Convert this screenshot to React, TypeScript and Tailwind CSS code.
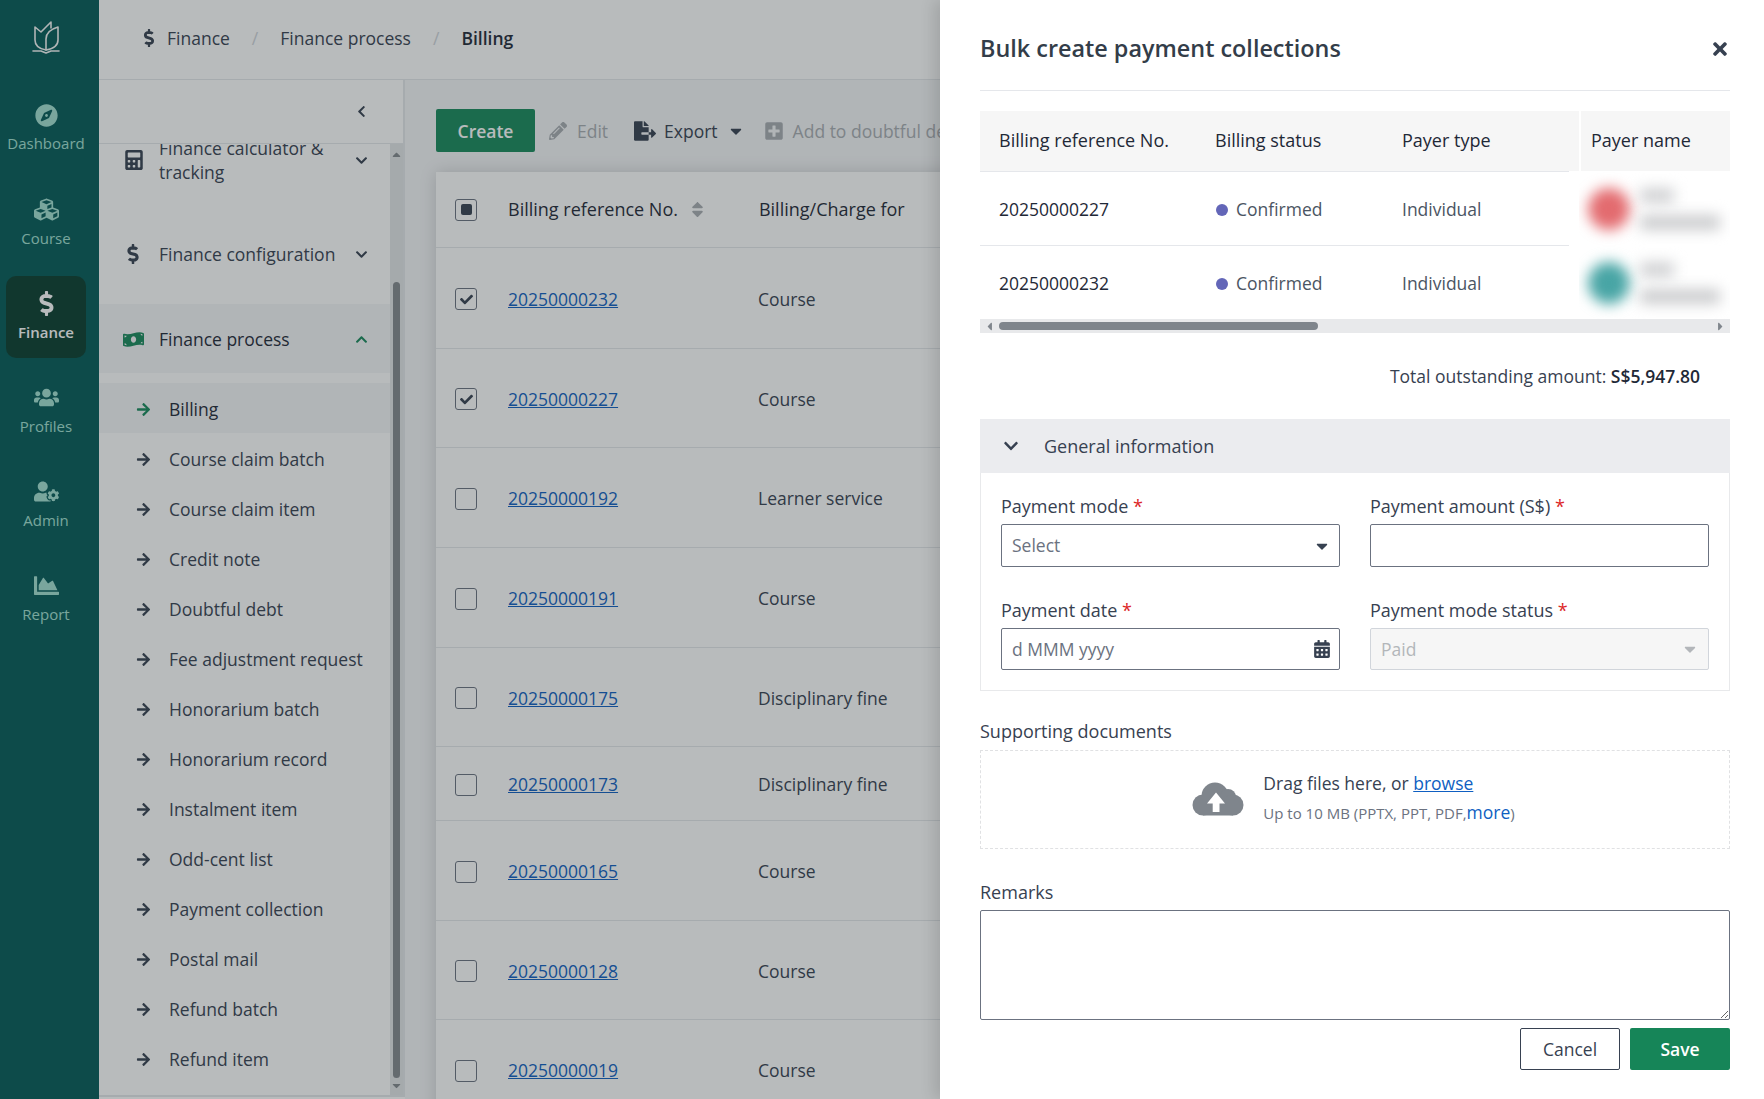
import React from "react";
import {
  FaArrowRight,
  FaCalculator,
  FaCalendarAlt,
  FaCaretDown,
  FaCaretLeft,
  FaCaretRight,
  FaCaretUp,
  FaChartArea,
  FaCheck,
  FaChevronDown,
  FaChevronLeft,
  FaChevronUp,
  FaCompass,
  FaCubes,
  FaDollarSign,
  FaFileExport,
  FaMoneyBillWave,
  FaPencilAlt,
  FaPlusSquare,
  FaSort,
  FaTimes,
  FaUserCog,
  FaUsers,
} from "react-icons/fa";

const railItems = [
  { label: "Dashboard", icon: <FaCompass size={23} /> },
  { label: "Course", icon: <FaCubes size={25} /> },
  { label: "Finance", icon: <FaDollarSign size={25} />, active: true },
  { label: "Profiles", icon: <FaUsers size={25} /> },
  { label: "Admin", icon: <FaUserCog size={25} /> },
  { label: "Report", icon: <FaChartArea size={25} /> },
];

const subItems = [
  "Course claim batch",
  "Course claim item",
  "Credit note",
  "Doubtful debt",
  "Fee adjustment request",
  "Honorarium batch",
  "Honorarium record",
  "Instalment item",
  "Odd-cent list",
  "Payment collection",
  "Postal mail",
  "Refund batch",
  "Refund item",
];

const billingRows = [
  { no: "20250000232", charge: "Course", checked: true, height: "h-[101px]" },
  { no: "20250000227", charge: "Course", checked: true, height: "h-[99px]" },
  { no: "20250000192", charge: "Learner service", height: "h-[100px]" },
  { no: "20250000191", charge: "Course", height: "h-[100px]" },
  { no: "20250000175", charge: "Disciplinary fine", height: "h-[99px]" },
  { no: "20250000173", charge: "Disciplinary fine", height: "h-[74px]" },
  { no: "20250000165", charge: "Course", height: "h-[100px]" },
  { no: "20250000128", charge: "Course", height: "h-[99px]" },
  { no: "20250000019", charge: "Course", height: "h-[100px]" },
];

function Logo() {
  return (
    <svg width="30" height="38" viewBox="0 0 30 38" fill="none" stroke="#f4f6f6" strokeWidth="1.6" strokeLinejoin="round" strokeLinecap="round">
      <path d="M15 31 C9 30 4 27 4 21 V8 L10 13 L20 3 V9" />
      <path d="M15 31 V20 C15 14 20 10 27 8 V21 C27 27 21 30 15 31 Z" />
      <path d="M2 32 H10 L15 34 L20 32 H28" />
    </svg>
  );
}

function UploadCloud() {
  return (
    <svg width="52" height="35" viewBox="0 0 52 35" fill="#7f858c" className="shrink-0">
      <circle cx="11" cy="23" r="10.5" />
      <circle cx="23" cy="14" r="13.5" />
      <circle cx="36" cy="15" r="8" />
      <circle cx="41" cy="23" r="10.5" />
      <rect x="11" y="15" width="30" height="18.5" />
      <path d="M24 10.5 L33 21.5 H27.5 V30 H20.7 V21.5 H15 Z" fill="#ffffff" />
    </svg>
  );
}

function Checkbox({ checked, mixed }: { checked?: boolean; mixed?: boolean }) {
  return (
    <span className="flex h-[22px] w-[22px] shrink-0 items-center justify-center rounded-[3px] border border-[#6b7280] bg-white text-[#374151]">
      {checked && <FaCheck size={13} />}
      {mixed && <span className="h-[11px] w-[11px] rounded-[2px] bg-[#374151]" />}
    </span>
  );
}

function Required() {
  return <span className="text-[#dc2626]"> *</span>;
}

function PayerName({ color }: { color: string }) {
  return (
    <div className="relative flex h-full items-center pl-[9px]">
      <span className={`h-[42px] w-[42px] rounded-full blur-[7px] ${color}`} />
      <div className="ml-[10px] flex flex-col gap-[12px]">
        <span className="h-[15px] w-[34px] bg-[#d0d1d3] blur-[7px]" />
        <span className="h-[15px] w-[80px] bg-[#cbccce] blur-[7px]" />
      </div>
    </div>
  );
}

function DrawerForm() {
  return (
    <aside className="absolute right-0 top-0 z-20 flex h-full w-[824px] flex-col bg-white pl-[40px] pr-[34px] text-[17.5px] text-[#374151] shadow-[-6px_0_14px_rgba(0,0,0,0.12)]">
      <div className="flex h-[91px] shrink-0 items-center justify-between border-b border-[#e5e7eb] pt-[8px]">
        <h2 className="text-[23.4px] font-semibold text-[#333d49]">Bulk create payment collections</h2>
        <button className="text-[#374151]">
          <FaTimes size={20} />
        </button>
      </div>

      <div className="mt-[20px] flex h-[222px] shrink-0 flex-col">
        <div className="flex h-[208px]">
          <div className="w-[599px]">
            <div className="flex h-[60px] items-center bg-[#f6f6f6] pb-[2px] text-[18px] font-medium text-[#1f2937]">
              <span className="w-[235px] pl-[19px]">Billing reference No.</span>
              <span className="w-[187px]">Billing status</span>
              <span>Payer type</span>
            </div>
            <div className="flex h-[75px] w-[589px] items-center border-y border-[#e5e7eb] pt-[2px] text-[#1f2937]">
              <span className="w-[235px] pl-[19px]">20250000227</span>
              <span className="flex w-[187px] items-center gap-[8px] pl-px text-[#4b5563]">
                <span className="h-[12px] w-[12px] rounded-full bg-[#6366b8]" />
                Confirmed
              </span>
              <span className="text-[#4b5563]">Individual</span>
            </div>
            <div className="flex h-[73px] w-[589px] items-center pt-[2px] text-[#1f2937]">
              <span className="w-[235px] pl-[19px]">20250000232</span>
              <span className="flex w-[187px] items-center gap-[8px] pl-px text-[#4b5563]">
                <span className="h-[12px] w-[12px] rounded-full bg-[#6366b8]" />
                Confirmed
              </span>
              <span className="text-[#4b5563]">Individual</span>
            </div>
          </div>
          <div className="w-[151px] overflow-hidden">
            <div className="flex h-[60px] items-center border-l-2 border-white bg-[#f6f6f6] pb-[2px] pl-[10px] text-[18px] font-medium text-[#1f2937]">
              Payer name
            </div>
            <div className="h-[75px]">
              <PayerName color="bg-[#e36b6f]" />
            </div>
            <div className="h-[73px]">
              <PayerName color="bg-[#48a5a5]" />
            </div>
          </div>
        </div>
        <div className="flex h-[14px] shrink-0 items-center justify-between bg-[#e8e9eb] px-[3px] text-[#7f858c]">
          <FaCaretLeft size={13} />
          <span className="ml-[3px] mr-auto h-[8px] w-[319px] rounded-full bg-[#7f858c]" />
          <FaCaretRight size={13} />
        </div>
      </div>

      <p className="mt-[30px] h-[24px] shrink-0 pr-[30px] text-right">
        Total outstanding amount: <span className="font-semibold text-[#1f2937]">S$5,947.80</span>
      </p>

      <section className="mt-[32px] h-[272px] shrink-0 border border-t-0 border-[#e8e9eb]">
        <div className="-mx-px flex h-[54px] items-center bg-[#ebecef] pl-[23px] text-[18px] font-medium">
          <FaChevronDown size={16} />
          <span className="ml-[25px]">General information</span>
        </div>
        <div className="grid grid-cols-[339px_339px] gap-x-[30px] px-[20px] pt-[20px] text-[18px]">
          <div>
            <label className="block h-[31px] font-medium">Payment mode<Required /></label>
            <div className="flex h-[43px] items-center justify-between rounded-[2px] border border-[#6b7280] pl-[10px] pr-[8px] text-[17.5px] text-[#6b7280]">
              Select
              <FaCaretDown size={18} className="text-[#374151]" />
            </div>
          </div>
          <div>
            <label className="block h-[31px] font-medium">Payment amount (S$)<Required /></label>
            <input className="block h-[43px] w-full rounded-[2px] border border-[#6b7280] bg-white" />
          </div>
          <div className="mt-[30px]">
            <label className="block h-[31px] font-medium">Payment date<Required /></label>
            <div className="flex h-[42px] items-center justify-between rounded-[2px] border border-[#6b7280] pl-[10px] pr-[8px] text-[17.5px] text-[#6b7280]">
              d MMM yyyy
              <FaCalendarAlt size={18} className="text-[#374151]" />
            </div>
          </div>
          <div className="mt-[30px]">
            <label className="block h-[31px] font-medium">Payment mode status<Required /></label>
            <div className="flex h-[42px] items-center justify-between rounded-[2px] border border-[#d1d5db] bg-[#f6f6f6] pl-[10px] pr-[9px] text-[17.5px] text-[#b3b6ba]">
              Paid
              <FaCaretDown size={18} />
            </div>
          </div>
        </div>
      </section>

      <label className="mt-[27px] block h-[32px] shrink-0 text-[18px] font-medium">Supporting documents</label>
      <div className="flex h-[99px] shrink-0 items-center justify-center gap-[19px] border border-dashed border-[#e0e1e3] pr-[3px]">
        <UploadCloud />
        <div className="-mt-[3px] flex flex-col">
          <span className="h-[29px]">
            Drag files here, or <span className="text-[#0f5fc2] underline">browse</span>
          </span>
          <span className="text-[15px] text-[#6b7280]">
            Up to 10 MB (PPTX, PPT, PDF,<span className="text-[17.5px] text-[#0f5fc2]">more</span>)
          </span>
        </div>
      </div>

      <label className="mt-[30px] block h-[31px] shrink-0 text-[18px] font-medium">Remarks</label>
      <textarea className="block h-[110px] w-full shrink-0 rounded-[2px] border border-[#6b7280] bg-white" />

      <div className="mt-[8px] flex justify-end gap-[10px]">
        <button className="h-[42px] w-[100px] rounded-[2px] border border-[#374151] bg-white text-[#374151]">Cancel</button>
        <button className="h-[42px] w-[100px] rounded-[2px] bg-[#168558] font-semibold text-white">Save</button>
      </div>
    </aside>
  );
}

export default function App() {
  return (
    <div className="relative flex h-[1099px] w-[1764px] overflow-hidden bg-white font-['Open_Sans',sans-serif] text-[17.5px] text-[#374151]">
      <nav className="flex h-full w-[99px] shrink-0 flex-col items-start bg-[#045a58] pl-[6px]">
        <div className="flex h-[88px] w-[80px] items-center justify-center pb-[12px]">
          <Logo />
        </div>
        <div className="flex flex-col gap-[12px]">
          {railItems.map((item) => (
            <div
              key={item.label}
              className={`flex h-[82px] w-[80px] flex-col items-center justify-center gap-[5px] rounded-[10px] text-[15px] ${
                item.active ? "bg-[#0a3d2f] font-semibold text-white" : "text-[#a3e0d2]"
              }`}
            >
              {item.icon}
              {item.label}
            </div>
          ))}
        </div>
      </nav>

      <div className="flex min-w-0 flex-1 flex-col">
        <header className="flex h-[80px] shrink-0 items-center border-b border-[#e5e7eb] pb-[3px] pl-[41px]">
          <FaDollarSign size={18} className="text-[#374151]" />
          <span className="ml-[9px]">Finance</span>
          <span className="mx-[22px] text-[#d1d5db]">/</span>
          <span>Finance process</span>
          <span className="mx-[22px] text-[#d1d5db]">/</span>
          <span className="font-semibold text-[#1f2937]">Billing</span>
        </header>

        <div className="flex min-h-0 flex-1">
          <div className="flex h-[1017px] w-[306px] shrink-0 flex-col border-r-2 border-b-2 border-[#e5e7eb]">
            <div className="flex h-[64px] shrink-0 items-center justify-end border-b border-[#e5e7eb] pr-[35px]">
              <FaChevronLeft size={13} />
            </div>
            <div className="flex min-h-0 flex-1">
              <div className="min-w-0 flex-1 overflow-hidden">
                <div className="-mt-[14px] flex h-[60px] items-center pl-[25px] pr-[22px]">
                  <FaCalculator size={20} />
                  <span className="ml-[15px] w-[190px] leading-[24px]">Finance calculator &amp; tracking</span>
                  <FaChevronDown size={13} className="ml-auto" />
                </div>
                <div className="mt-[34px] flex h-[60px] items-center pl-[25px] pr-[22px]">
                  <span className="flex w-[18px] justify-center"><FaDollarSign size={20} /></span>
                  <span className="ml-[17px]">Finance configuration</span>
                  <FaChevronDown size={13} className="ml-auto" />
                </div>
                <div className="mt-[20px] flex h-[69px] items-center bg-[#f5f6f8] pl-[24px] pr-[22px] pt-[2px]">
                  <FaMoneyBillWave size={21} className="text-[#19895c]" />
                  <span className="ml-[15px] font-medium text-[#1f2937]">Finance process</span>
                  <FaChevronUp size={13} className="ml-auto text-[#19895c]" />
                </div>
                <div className="mt-[10px] flex h-[50px] items-center bg-[#f5f6f8] pl-[37px] pt-[2px]">
                  <FaArrowRight size={15} className="text-[#19895c]" />
                  <span className="ml-[18px] font-medium text-[#1f2937]">Billing</span>
                </div>
                {subItems.map((label) => (
                  <div key={label} className="flex h-[50px] items-center pl-[37px] pt-[2px]">
                    <FaArrowRight size={15} />
                    <span className="ml-[18px]">{label}</span>
                  </div>
                ))}
              </div>
              <div className="flex w-[13px] shrink-0 flex-col items-center bg-[#e4e6e8] text-[#84898e]">
                <FaCaretUp size={13} className="mt-[4px]" />
                <span className="mt-[121px] h-[796px] w-[7px] rounded-full bg-[#84898e]" />
                <FaCaretDown size={13} className="mt-auto mb-[3px]" />
              </div>
            </div>
          </div>

          <main className="min-w-0 flex-1 overflow-hidden bg-[#f5f6f8] pl-[31px] pt-[29px]">
            <div className="flex h-[43px] items-center">
              <button className="h-[43px] w-[99px] shrink-0 rounded-[2px] bg-[#19895c] pt-px font-semibold text-white">Create</button>
              <span className="ml-[14px] flex items-center gap-[10px] pt-px text-[#a9adb2]">
                <FaPencilAlt size={18} />
                Edit
              </span>
              <span className="ml-[26px] flex items-center gap-[8px] pt-px font-medium text-[#374151]">
                <FaFileExport size={22} />
                Export
                <FaCaretDown size={18} className="ml-[1px]" />
              </span>
              <span className="ml-[19px] flex items-center gap-[9px] whitespace-nowrap pt-px text-[#a9adb2]">
                <FaPlusSquare size={20} />
                Add to doubtful debt
              </span>
            </div>

            <div className="mt-[20px] w-[600px] bg-white shadow-[0_0_16px_rgba(0,0,0,0.16)]">
              <div className="flex h-[76px] items-center border-b border-[#e5e7eb] pl-[19px] text-[18px] font-medium text-[#1f2937]">
                <Checkbox mixed />
                <span className="ml-[31px]">Billing reference No.</span>
                <FaSort size={19} className="ml-[10px] text-[#a9adb2]" />
                <span className="ml-[52px] whitespace-nowrap">Billing/Charge for</span>
              </div>
              {billingRows.map((row) => (
                <div key={row.no} className={`flex items-center border-b border-[#e5e7eb] pl-[19px] pt-[2px] ${row.height}`}>
                  <Checkbox checked={row.checked} />
                  <a className="ml-[31px] w-[250px] text-[#0f5fc2] underline">{row.no}</a>
                  <span>{row.charge}</span>
                </div>
              ))}
            </div>
          </main>
        </div>
      </div>

      <div className="absolute inset-0 z-10 bg-[rgba(35,43,48,0.32)]" />
      <DrawerForm />
    </div>
  );
}
